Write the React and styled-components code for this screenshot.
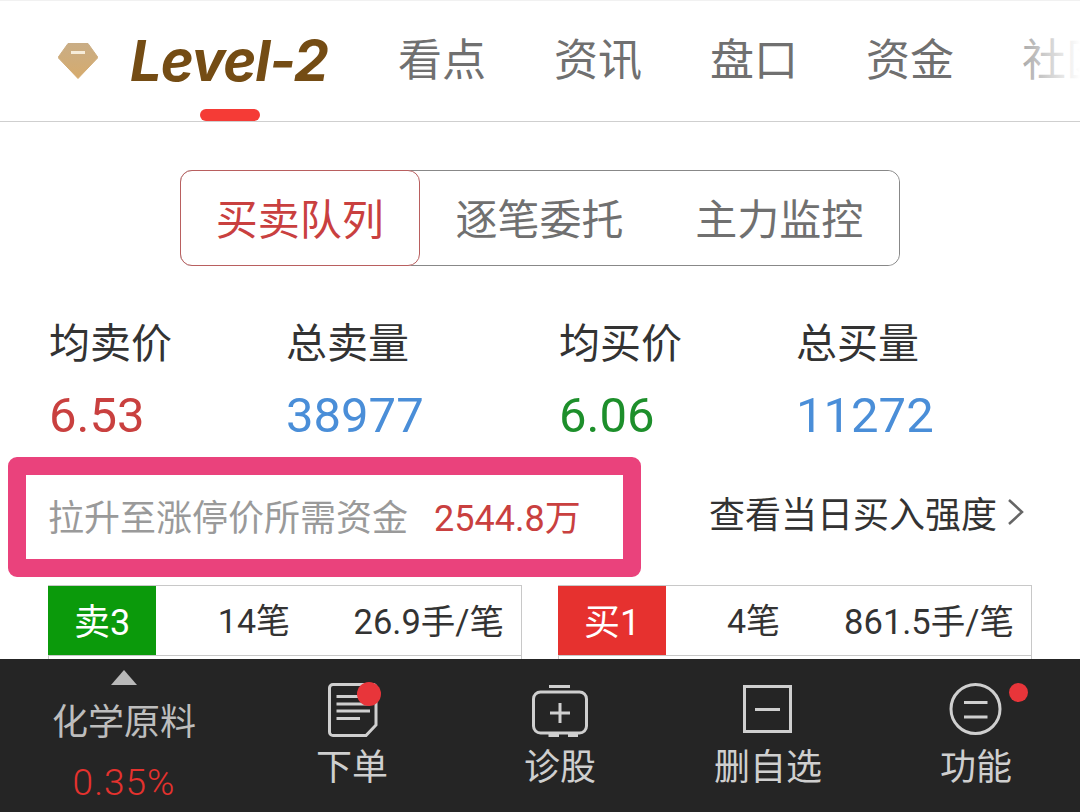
import React from 'react';
import styled, {createGlobalStyle} from 'styled-components';

const GlobalStyle = createGlobalStyle`
    html, body{
        margin:0;
        padding:0;
        background-color:#fff;
    }
    *{
        box-sizing:border-box;
    }
`;

const Page = styled.div`
    position:relative;
    width:1080px;
    height:812px;
    overflow:hidden;
    background-color:#fff;
    font-family:Roboto, "Noto Sans CJK SC", sans-serif;
`;

const Header = styled.div`
    position:relative;
    height:122px;
    display:flex;
    align-items:center;
    padding-left:58px;
    border-top:1px solid #f1f1f1;
    border-bottom:1px solid #cfcfcf;
    overflow:hidden;
`;
const Diamond = styled.svg`
    width:40px;
    height:36px;
    flex:none;
`;
const LogoTab = styled.div`
    width:268px;
    margin-left:32px;
    flex:none;
    font-family:Inter, sans-serif;
    font-size:56px;
    font-weight:700;
    font-style:italic;
    line-height:60px;
    letter-spacing:-1px;
    color:#744c14;
    white-space:nowrap;
`;
const Indicator = styled.div`
    position:absolute;
    left:200px;
    bottom:0;
    width:60px;
    height:12px;
    border-radius:6px;
    background-color:#f53b36;
`;
const TabList = styled.div`
    display:flex;
    gap:68px;
    flex:none;
`;
const Tab = styled.div`
    font-size:44px;
    line-height:60px;
    color:#707070;
    white-space:nowrap;
`;
const Fade = styled.div`
    position:absolute;
    right:0;
    top:0;
    bottom:0;
    width:64px;
    background:linear-gradient(to right, rgba(255,255,255,.35), #fff);
`;

const Segments = styled.div`
    display:flex;
    width:720px;
    height:96px;
    margin:48px 0 0 180px;
    border:1px solid #888;
    border-radius:12px;
`;
const Segment = styled.div`
    width:240px;
    margin:${props=>props.$active ? "-1px 0 -1px -1px" : "0"};
    padding-bottom:4px;
    display:flex;
    align-items:center;
    justify-content:center;
    font-size:42px;
    color:${props=>props.$active ? "#c9403f" : "#707070"};
    border:${props=>props.$active ? "1px solid #b95f5f" : "0"};
    border-radius:12px;
    background-color:#fff;
`;

const Stats = styled.div`
    display:grid;
    grid-template-columns:237px 273px 237px 237px;
    margin:54px 0 0 49px;
`;
const Stat = styled.div`
    display:flex;
    flex-direction:column;
`;
const StatLabel = styled.span`
    font-size:41px;
    line-height:48px;
    color:#333;
`;
const StatValue = styled.span`
    font-size:49px;
    line-height:56px;
    margin-top:20px;
    color:${props=>props.$color};
`;

const InfoRow = styled.div`
    display:flex;
    align-items:center;
    margin:13px 0 0 8px;
`;
const Highlight = styled.div`
    display:flex;
    align-items:center;
    width:633px;
    height:120px;
    padding:0 0 4px 22px;
    border:18px solid #ea427c;
    border-radius:9px;
    font-size:36px;
    white-space:nowrap;
`;
const HighlightLabel = styled.span`
    color:#9a9a9a;
`;
const HighlightValue = styled.span`
    margin-left:26px;
    color:#c9403f;
`;
const InfoLink = styled.div`
    display:flex;
    align-items:center;
    margin-left:68px;
    padding-bottom:10px;
    font-size:36px;
    color:#333;
    white-space:nowrap;
`;
const Chevron = styled.svg`
    width:20px;
    height:30px;
    margin-left:9px;
`;

const Tables = styled.div`
    display:flex;
    gap:36px;
    margin:8px 0 0 48px;
`;
const Table = styled.div`
    width:474px;
    border:1px solid #c8c8c8;
`;
const TableRow = styled.div`
    display:flex;
    align-items:center;
    height:70px;
    border-bottom:1px solid #c8c8c8;
    font-size:34px;
    color:#333;
    white-space:nowrap;
`;
const Badge = styled.div`
    display:flex;
    align-items:center;
    justify-content:center;
    width:108px;
    height:69px;
    margin:-1px 0 0 -1px;
    padding-bottom:2px;
    font-size:36px;
    color:#fff;
    background-color:${props=>props.$color};
`;
const Count = styled.span`
    width:${props=>props.$width}px;
    margin-bottom:4px;
    text-align:right;
`;
const PerOrder = styled.span`
    margin:0 0 4px auto;
    padding-right:17px;
    font-size:34.5px;
`;

const BottomBar = styled.div`
    position:absolute;
    left:0;
    right:0;
    bottom:0;
    height:153px;
    display:grid;
    grid-template-columns:248px repeat(4, 208px);
    background-color:#252525;
`;
const Sector = styled.div`
    display:flex;
    flex-direction:column;
    align-items:center;
    padding-top:11px;
`;
const Triangle = styled.div`
    width:0;
    height:0;
    border-left:13px solid transparent;
    border-right:13px solid transparent;
    border-bottom:15px solid #b9b9b9;
`;
const SectorName = styled.span`
    margin-top:16px;
    font-size:36px;
    line-height:44px;
    color:#bdbdbd;
`;
const SectorChange = styled.span`
    margin-top:16px;
    font-size:37px;
    font-weight:300;
    line-height:44px;
    letter-spacing:1px;
    color:#e5322e;
`;
const Action = styled.div`
    display:flex;
    flex-direction:column;
    align-items:center;
    padding-top:23px;
`;
const IconSlot = styled.div`
    position:relative;
    width:56px;
    height:56px;
`;
const Icon = styled.svg`
    display:block;
    width:56px;
    height:56px;
    fill:none;
    stroke:#cfcfcf;
    stroke-width:3;
`;
const Dot = styled.div`
    position:absolute;
    left:${props=>props.$left}px;
    top:${props=>props.$top}px;
    width:${props=>props.$size}px;
    height:${props=>props.$size}px;
    border-radius:50%;
    background-color:#e8353a;
`;
const ActionLabel = styled.span`
    margin-top:8px;
    font-size:36px;
    line-height:44px;
    color:#cfcfcf;
`;

const tabs = ["看点", "资讯", "盘口", "资金", "社区"];
const segments = ["买卖队列", "逐笔委托", "主力监控"];
const stats = [
    {label:"均卖价", value:"6.53", color:"#c9403f"},
    {label:"总卖量", value:"38977", color:"#4a8ed8"},
    {label:"均买价", value:"6.06", color:"#1d8f2b"},
    {label:"总买量", value:"11272", color:"#4a8ed8"},
];
const orders = [
    {name:"卖3", color:"#0b9a0b", count:"14笔", width:134, per:"26.9手/笔"},
    {name:"买1", color:"#e6312f", count:"4笔", width:114, per:"861.5手/笔"},
];

const App = ()=>{
    return(
        <Page>
            <GlobalStyle/>
            <Header>
                <Diamond viewBox="0 0 40 36">
                    <defs>
                        <linearGradient id="gold" x1="0" y1="0" x2="0" y2="1">
                            <stop offset="0" stopColor="#c9ad85"/>
                            <stop offset="1" stopColor="#d6ab6d"/>
                        </linearGradient>
                    </defs>
                    <path d="M10 0.5H30L40 14.5L20 35.5L0 14.5Z" fill="url(#gold)" stroke="url(#gold)" strokeLinejoin="round"/>
                    <rect x="13" y="8" width="14" height="3" fill="#f6ecd9"/>
                </Diamond>
                <LogoTab>Level-2</LogoTab>
                <Indicator/>
                <TabList>
                    {tabs.map(tab=><Tab key={tab}>{tab}</Tab>)}
                </TabList>
                <Fade/>
            </Header>

            <Segments>
                {segments.map((segment, idx)=>(
                    <Segment key={segment} $active={idx === 0}>{segment}</Segment>
                ))}
            </Segments>

            <Stats>
                {stats.map(stat=>(
                    <Stat key={stat.label}>
                        <StatLabel>{stat.label}</StatLabel>
                        <StatValue $color={stat.color}>{stat.value}</StatValue>
                    </Stat>
                ))}
            </Stats>

            <InfoRow>
                <Highlight>
                    <HighlightLabel>拉升至涨停价所需资金</HighlightLabel>
                    <HighlightValue>2544.8万</HighlightValue>
                </Highlight>
                <InfoLink>
                    查看当日买入强度
                    <Chevron viewBox="0 0 20 30">
                        <path d="M3 3L16 15L3 27" fill="none" stroke="#666" strokeWidth="2.5"/>
                    </Chevron>
                </InfoLink>
            </InfoRow>

            <Tables>
                {orders.map(order=>(
                    <Table key={order.name}>
                        <TableRow>
                            <Badge $color={order.color}>{order.name}</Badge>
                            <Count $width={order.width}>{order.count}</Count>
                            <PerOrder>{order.per}</PerOrder>
                        </TableRow>
                        <TableRow/>
                    </Table>
                ))}
            </Tables>

            <BottomBar>
                <Sector>
                    <Triangle/>
                    <SectorName>化学原料</SectorName>
                    <SectorChange>0.35%</SectorChange>
                </Sector>
                <Action>
                    <IconSlot>
                        <Icon viewBox="0 0 56 56">
                            <path d="M9 2.500H49A3 3 0 0 1 52 5.500V43L42 53.500H9A3.500 3.500 0 0 1 5.500 50V6A3.500 3.500 0 0 1 9 2.500Z"/>
                            <path d="M12.500 14.500H46M12.500 22H46M12.500 29H46M12.500 36.500H36"/>
                        </Icon>
                        <Dot $left={33} $top={0} $size={24}/>
                    </IconSlot>
                    <ActionLabel>下单</ActionLabel>
                </Action>
                <Action>
                    <IconSlot>
                        <Icon viewBox="0 0 56 56">
                            <rect x="1.500" y="10" width="53" height="41" rx="7"/>
                            <path d="M17 4.500H38M16.500 53.500H27M36 53.500H46M28 21V41M18 31H38"/>
                        </Icon>
                    </IconSlot>
                    <ActionLabel>诊股</ActionLabel>
                </Action>
                <Action>
                    <IconSlot>
                        <Icon viewBox="0 0 56 56">
                            <rect x="4.500" y="4.500" width="46" height="45"/>
                            <path d="M15 27.500H40"/>
                        </Icon>
                    </IconSlot>
                    <ActionLabel>删自选</ActionLabel>
                </Action>
                <Action>
                    <IconSlot>
                        <Icon viewBox="0 0 56 56">
                            <circle cx="27.500" cy="27" r="24.500"/>
                            <path d="M16 20.500H39.500M16 35H39.500"/>
                        </Icon>
                        <Dot $left={61} $top={1} $size={19}/>
                    </IconSlot>
                    <ActionLabel>功能</ActionLabel>
                </Action>
            </BottomBar>
        </Page>
    )
}

export default App;
